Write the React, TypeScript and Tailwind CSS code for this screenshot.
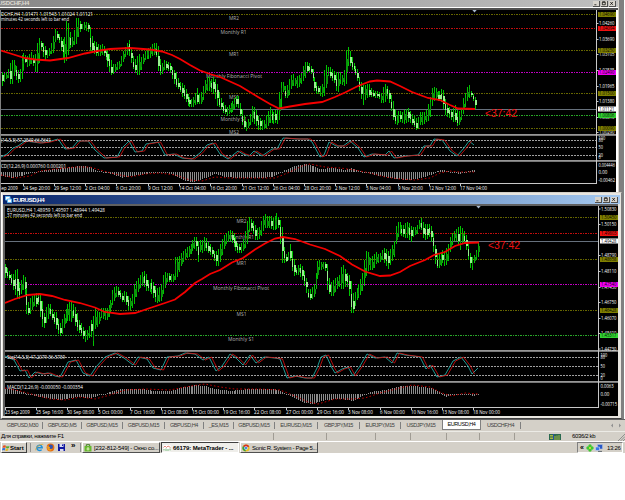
import { ReactNode } from "react";
import clsx from "clsx";

type Point = [number, number];
type Range = [number, number, number];

interface Level {
  y: number;
  color: string;
  tag: string;
  label?: string;
  labelX?: number;
  labelWidth?: number;
}

interface ChartData {
  box: { x: number; y: number; w: number; h: number };
  axisX: number;
  bottom: number;
  separators: number[];
  info: { text: string; x: number; y: number; w: number }[];
  levels: Level[];
  price: { y: number; tag: string };
  ticks: [number, string][];
  smallTicks: [number, string][];
  dates: [number, string][];
  ranges: Range[];
  average: Point[];
  stochLevels: number[];
  stoch: Point[];
  zero: number;
  macd: Point[];
  signal: Point[];
  timer: Point;
  shiftMark: Point;
}

const OLIVE = "#808000";
const RED = "#f01010";
const MAGENTA = "#f000f0";
const GREEN = "#32d232";
const BAR_STEP = 1.953;

const usdchf: ChartData = {
  box: { x: 1, y: 10, w: 615, h: 182 },
  axisX: 596.5,
  bottom: 183.5,
  separators: [134, 160],
  info: [
    { text: "DCHF,H4  1.01471 1.01543 1.01024 1.01121", x: 1, y: 16, w: 92 },
    { text: "minutes 42 seconds left to bar end", x: 1, y: 21, w: 68 },
    { text: "(14,3,3) 57.2549 66.5641", x: 1, y: 142, w: 50 },
    { text: "CD(12,26,9) 0.000760 0.000201", x: 1, y: 168, w: 65 },
  ],
  levels: [
    { y: 14.5, color: OLIVE, tag: "1.04690", label: "MR2", labelX: 229, labelWidth: 10 },
    { y: 28.5, color: RED, tag: "1.04094", label: "Monthly R1", labelX: 220.5, labelWidth: 26 },
    { y: 50.5, color: OLIVE, tag: "1.03250", label: "MR1", labelX: 229, labelWidth: 10 },
    { y: 72.5, color: MAGENTA, tag: "1.02490", label: "Monthly Fibonacci Pivot", labelX: 206, labelWidth: 56 },
    { y: 93.5, color: OLIVE, tag: "1.01500", label: "MS1", labelX: 229, labelWidth: 10 },
    { y: 115.5, color: GREEN, tag: "1.00806", label: "Monthly S1", labelX: 220.5, labelWidth: 26 },
    { y: 128.5, color: OLIVE, tag: "1.00090", label: "MS2", labelX: 229, labelWidth: 10 },
  ],
  price: { y: 109.5, tag: "1.01121" },
  ticks: [
    [23.5, "1.04260"], [39.5, "1.03690"], [54.5, "1.03105"], [70.5, "1.02535"],
    [86.5, "1.01965"], [101.5, "1.01380"], [117.5, "1.00810"], [132.5, "1.00290"],
  ],
  smallTicks: [
    [138.5, "100"], [140.5, "80"], [147.5, "50"], [155, "20"], [157.5, "0"],
    [165, "0.004446"], [172.5, "0.00"], [180, "-0.00462"],
  ],
  dates: [
    [-7, "22 Sep 2009"], [23, "24 Sep 20:00"], [54, "29 Sep 12:00"], [85, "2 Oct 04:00"],
    [116, "6 Oct 20:00"], [148, "9 Oct 12:00"], [179, "14 Oct 04:00"], [210, "16 Oct 20:00"],
    [242, "21 Oct 12:00"], [273, "26 Oct 04:00"], [304, "28 Oct 20:00"], [335, "2 Nov 12:00"],
    [366, "5 Nov 04:00"], [398, "9 Nov 20:00"], [429, "12 Nov 12:00"], [460, "17 Nov 04:00"],
  ],
  ranges: [
    [2, 72, 86], [5, 74, 79], [8, 69, 78], [11, 60, 87], [14, 60, 75], [17, 71, 83], [20, 69, 82],
    [22, 51, 78], [25, 55, 62], [28, 57, 68], [31, 52, 63], [34, 56, 66], [36, 54, 75], [38, 36, 70],
    [41, 41, 49], [44, 45, 60], [47, 50, 58], [50, 47, 54], [53, 35, 53], [55, 28, 40], [58, 33, 40],
    [61, 38, 52], [64, 41, 63], [67, 17, 60], [70, 31, 48], [73, 39, 46], [76, 18, 44], [79, 19, 34],
    [82, 24, 29], [85, 22, 30], [88, 23, 32], [90, 28, 52], [93, 41, 53], [96, 42, 56], [99, 46, 56],
    [102, 44, 54], [105, 49, 58], [108, 50, 68], [111, 60, 75], [114, 66, 73], [117, 63, 70],
    [120, 60, 68], [123, 51, 62], [126, 45, 54], [129, 40, 56], [132, 55, 67], [135, 60, 73],
    [138, 53, 76], [141, 58, 69], [144, 52, 60], [147, 49, 59], [150, 48, 58], [153, 43, 55],
    [156, 43, 55], [158, 45, 70], [161, 65, 76], [164, 60, 70], [167, 62, 70], [170, 63, 73],
    [173, 69, 82], [176, 73, 87], [179, 82, 90], [182, 83, 97], [185, 88, 101], [188, 95, 106],
    [191, 100, 107], [194, 97, 106], [197, 88, 104], [200, 95, 104], [202, 90, 104], [205, 80, 93],
    [208, 76, 90], [211, 79, 92], [214, 77, 95], [217, 85, 106], [220, 97, 108], [223, 103, 113],
    [226, 108, 115], [229, 105, 114], [232, 102, 112], [235, 98, 108], [238, 95, 106], [240, 102, 115],
    [243, 112, 128], [246, 122, 131], [249, 118, 126], [252, 106, 122], [255, 108, 124], [258, 117, 130],
    [261, 120, 130], [264, 120, 129], [267, 112, 127], [270, 107, 122], [273, 113, 124], [276, 110, 123],
    [278, 110, 124], [280, 83, 118], [283, 82, 91], [286, 88, 100], [289, 80, 95], [292, 73, 86],
    [295, 78, 86], [298, 76, 88], [301, 73, 83], [304, 62, 79], [307, 62, 72], [310, 65, 72],
    [313, 70, 82], [315, 80, 94], [319, 87, 94], [322, 86, 97], [325, 65, 95], [328, 67, 76],
    [331, 68, 79], [334, 71, 83], [337, 73, 95], [340, 72, 83], [343, 78, 86], [346, 48, 83],
    [348, 47, 62], [351, 55, 69], [354, 65, 71], [357, 67, 78], [360, 80, 94], [363, 85, 105],
    [366, 85, 98], [369, 84, 97], [372, 90, 96], [375, 91, 98], [378, 92, 97], [381, 93, 103],
    [384, 84, 103], [387, 86, 98], [390, 93, 107], [393, 103, 122], [396, 118, 125], [399, 110, 122],
    [402, 113, 122], [405, 110, 124], [408, 108, 122], [411, 113, 123], [414, 116, 127], [417, 120, 131],
    [420, 112, 125], [423, 113, 124], [426, 110, 122], [429, 100, 120], [432, 87, 104], [435, 87, 98],
    [438, 92, 101], [441, 90, 100], [443, 88, 108], [446, 103, 116], [449, 107, 117], [452, 111, 121],
    [455, 105, 122], [458, 113, 127], [461, 108, 120], [463, 98, 113], [466, 90, 103], [468, 83, 98],
    [471, 92, 97], [473, 95, 102], [475, 98, 110],
  ],
  average: [
    [1, 50.5], [12, 54], [25, 58], [35, 59.5], [50, 60.5], [68, 58], [85, 53.5], [100, 50.5],
    [110, 49], [130, 48], [150, 49.5], [162, 51.5], [172, 55], [180, 59], [190, 65], [200, 70.5],
    [210, 74], [220, 77], [240, 86], [258, 97], [270, 104], [279, 108.5], [290, 106.5], [305, 104],
    [322, 102], [335, 97], [345, 92.5], [358, 86], [370, 81.5], [377, 80.5], [390, 81.5], [400, 86],
    [412, 92], [428, 98], [440, 100], [450, 105], [458, 108.5], [475, 109],
  ],
  stochLevels: [140.5, 147.5, 155.5],
  stoch: [
    [1, 157], [7, 154], [13, 148], [18, 146], [25, 141], [33, 142], [40, 143], [48, 142], [58, 139],
    [65, 149], [72, 148], [78, 141], [88, 141], [95, 150], [104, 158], [117, 157], [122, 148],
    [129, 141], [135, 152], [142, 151], [146, 144], [158, 142], [165, 155], [174, 154], [182, 158],
    [192, 159], [200, 153], [207, 145], [213, 143], [220, 154], [228, 159], [238, 151], [243, 154],
    [249, 156], [254, 151], [262, 156], [272, 149], [277, 149], [283, 138], [297, 139], [308, 139],
    [312, 142], [320, 157], [324, 155], [329, 142], [336, 146], [343, 146], [350, 141], [358, 148],
    [364, 157], [372, 154], [385, 155], [389, 151], [394, 158], [405, 156], [418, 155], [424, 146],
    [430, 146], [434, 139], [442, 140], [450, 151], [457, 156], [464, 148], [469, 141], [474, 145],
  ],
  zero: 172,
  macd: [
    [1, 176], [12, 178], [25, 175], [33, 172], [40, 171], [55, 169], [65, 168], [80, 166], [90, 167],
    [97, 171], [105, 172], [115, 175], [122, 178], [130, 176], [140, 175], [150, 173], [165, 172],
    [175, 176], [185, 181], [195, 182], [205, 178], [215, 174], [225, 177], [240, 178], [260, 178],
    [272, 177], [280, 173], [285, 170], [295, 166], [305, 164], [310, 165], [320, 169], [332, 168],
    [345, 170], [350, 168], [360, 171], [370, 174], [380, 176], [395, 179], [410, 180], [420, 178],
    [430, 175], [437, 171], [443, 170], [450, 172], [460, 174], [468, 171], [474, 170],
  ],
  signal: [
    [1, 175], [15, 178], [30, 176], [40, 171], [55, 169], [75, 167], [90, 167], [100, 170], [115, 174],
    [130, 177], [145, 174], [160, 173], [175, 175], [190, 180], [202, 181], [215, 177], [230, 178],
    [255, 178], [275, 178], [290, 172], [302, 166], [310, 164], [325, 167], [340, 168], [355, 170],
    [370, 173], [385, 177], [400, 179], [415, 180], [430, 178], [440, 173], [450, 171], [460, 172],
    [474, 172],
  ],
  timer: [485, 117],
  shiftMark: [474.5, 10],
};

const eurusd: ChartData = {
  box: { x: 5, y: 206, w: 613, h: 210 },
  axisX: 598.5,
  bottom: 407.5,
  separators: [350, 381],
  info: [
    { text: "EURUSD,H4  1.48959 1.49597 1.48944 1.49428", x: 7, y: 212, w: 98 },
    { text: "37 minutes 42 seconds left to bar end", x: 7, y: 217, w: 75 },
    { text: "Sto(14,3,3) 47.2079 36.5739", x: 7, y: 358.5, w: 58 },
    { text: "MACD(12,26,9) -0.000050 -0.000354", x: 7, y: 389, w: 76 },
  ],
  levels: [
    { y: 217.5, color: OLIVE, tag: "1.50450", label: "MR2", labelX: 236.5, labelWidth: 10 },
    { y: 233.5, color: RED, tag: "1.49803", label: "Monthly R1", labelX: 228, labelWidth: 26 },
    { y: 259.5, color: OLIVE, tag: "1.48658", label: "MR1", labelX: 236.5, labelWidth: 10 },
    { y: 284.5, color: MAGENTA, tag: "1.47540", label: "Monthly Fibonacci Pivot", labelX: 213, labelWidth: 56 },
    { y: 310.5, color: OLIVE, tag: "1.46428", label: "MS1", labelX: 236.5, labelWidth: 10 },
    { y: 335.5, color: GREEN, tag: "1.45317", label: "Monthly S1", labelX: 228, labelWidth: 26 },
  ],
  price: { y: 241.5, tag: "1.49428" },
  ticks: [
    [209, "1.50830"], [224.5, "1.50150"], [255.5, "1.48790"], [271.5, "1.48110"],
    [287.5, "1.47430"], [302.5, "1.46750"], [318.5, "1.46070"], [333.5, "1.45410"], [349, "1.44730"],
  ],
  smallTicks: [
    [355, "100"], [357.5, "80"], [366.5, "50"], [375, "20"], [378, "0"],
    [386, "0.0063"], [394.5, "0.00"], [404.5, "-0.00715"],
  ],
  dates: [
    [5, "23 Sep 2009"], [36, "25 Sep 16:00"], [67, "30 Sep 08:00"], [98, "5 Oct 00:00"],
    [130, "7 Oct 16:00"], [161, "12 Oct 08:00"], [192, "15 Oct 00:00"], [223, "19 Oct 16:00"],
    [254, "22 Oct 08:00"], [286, "27 Oct 00:00"], [317, "29 Oct 16:00"], [348, "3 Nov 08:00"],
    [380, "6 Nov 00:00"], [411, "10 Nov 16:00"], [442, "13 Nov 08:00"], [473, "18 Nov 00:00"],
  ],
  ranges: [
    [5, 264, 278], [8, 270, 277], [11, 274, 285], [14, 275, 292], [16, 264, 299], [19, 285, 299],
    [22, 276, 290], [24, 275, 288], [26, 283, 313], [28, 303, 315], [31, 297, 313], [34, 296, 306],
    [37, 293, 307], [39, 293, 304], [41, 295, 326], [44, 313, 328], [47, 305, 320], [50, 304, 316],
    [53, 313, 322], [56, 312, 329], [59, 325, 337], [62, 318, 333], [65, 311, 323], [68, 303, 320],
    [71, 302, 322], [74, 305, 317], [76, 308, 330], [79, 320, 332], [82, 325, 337], [85, 330, 342],
    [88, 330, 338], [91, 320, 337], [93, 316, 346], [95, 308, 327], [98, 314, 326], [101, 308, 317],
    [104, 308, 320], [107, 308, 320], [110, 302, 313], [113, 288, 303], [116, 286, 297], [119, 288, 297],
    [122, 293, 302], [125, 290, 302], [128, 296, 310], [131, 299, 310], [134, 284, 303], [137, 280, 293],
    [140, 275, 287], [143, 270, 285], [146, 275, 291], [149, 285, 291], [152, 278, 294], [155, 286, 302],
    [158, 289, 303], [161, 285, 301], [164, 272, 291], [167, 273, 282], [170, 274, 282], [173, 274, 282],
    [175, 257, 280], [178, 258, 274], [181, 253, 265], [184, 250, 259], [187, 247, 258], [190, 245, 255],
    [193, 239, 250], [196, 236, 247], [198, 242, 264], [200, 240, 251], [202, 241, 253], [205, 236, 250],
    [208, 242, 253], [211, 245, 255], [214, 251, 261], [217, 252, 268], [220, 244, 261], [223, 236, 250],
    [226, 233, 243], [229, 230, 240], [232, 231, 243], [235, 236, 250], [238, 245, 253], [241, 244, 253],
    [244, 238, 250], [247, 222, 245], [249, 217, 232], [252, 220, 230], [255, 225, 240], [258, 230, 240],
    [261, 221, 235], [264, 213, 227], [267, 217, 228], [270, 216, 228], [273, 219, 230], [276, 213, 229],
    [279, 218, 228], [282, 224, 263], [285, 255, 263], [288, 253, 260], [290, 244, 260], [293, 255, 276],
    [296, 268, 275], [299, 264, 275], [302, 266, 280], [305, 274, 290], [308, 291, 299], [311, 288, 300],
    [314, 284, 296], [317, 262, 282], [319, 260, 270], [322, 263, 269], [325, 262, 268], [327, 263, 289],
    [330, 284, 296], [333, 280, 296], [336, 278, 289], [339, 275, 287], [342, 263, 290], [345, 270, 286],
    [348, 275, 287], [350, 277, 312], [353, 295, 313], [356, 290, 300], [359, 283, 297], [362, 276, 292],
    [364, 262, 287], [367, 248, 272], [370, 258, 270], [373, 256, 270], [376, 252, 264], [379, 255, 262],
    [382, 250, 260], [385, 248, 264], [388, 252, 269], [391, 247, 262], [394, 240, 256], [396, 223, 240],
    [399, 222, 233], [402, 226, 236], [405, 224, 238], [408, 222, 238], [411, 226, 242], [414, 228, 235],
    [417, 226, 234], [420, 217, 226], [423, 222, 238], [426, 225, 240], [429, 224, 236], [432, 228, 246],
    [434, 242, 262], [437, 255, 269], [440, 253, 266], [443, 250, 262], [445, 252, 267], [448, 245, 262],
    [451, 235, 248], [454, 232, 241], [457, 228, 240], [460, 226, 250], [463, 230, 240], [466, 235, 250],
    [468, 245, 260], [471, 258, 272], [474, 255, 262], [477, 246, 258], [479, 236, 255],
  ],
  average: [
    [5, 303], [15, 299], [28, 295], [40, 294], [52, 296], [65, 300], [80, 303], [95, 307.5],
    [105, 312], [120, 314], [135, 313], [150, 308], [165, 303], [175, 299.5], [185, 292], [195, 283],
    [202, 279], [210, 274], [220, 270], [232, 262.5], [243, 258], [255, 249.5], [265, 243.5],
    [275, 238.5], [283, 237], [295, 239], [310, 244.5], [325, 249], [340, 256], [352, 264.5],
    [365, 271.5], [380, 276], [390, 275.5], [400, 272], [410, 266], [425, 260], [434, 255],
    [445, 252], [455, 246], [465, 243], [479, 242.5],
  ],
  stochLevels: [357.5, 366.5, 375.5],
  stoch: [
    [5, 356], [14, 360], [20, 371], [25, 370], [29, 378], [35, 372], [42, 374], [48, 373], [55, 376],
    [60, 377], [68, 362], [76, 360], [83, 373], [90, 376], [96, 367], [105, 357], [115, 353],
    [124, 358], [133, 365], [138, 357], [147, 359], [153, 368], [161, 370], [167, 357], [178, 356],
    [185, 353], [195, 354], [203, 360], [209, 357], [216, 371], [222, 366], [230, 354], [236, 358],
    [243, 365], [250, 355], [256, 363], [264, 357], [275, 358], [280, 359], [287, 378], [295, 376],
    [305, 378], [312, 378], [317, 368], [321, 357], [326, 355], [332, 368], [335, 373], [342, 369],
    [348, 367], [353, 376], [360, 366], [367, 354], [375, 358], [385, 357], [392, 363], [397, 353],
    [405, 355], [420, 357], [426, 369], [430, 365], [437, 377], [445, 375], [453, 361], [461, 357],
    [468, 366], [472, 374], [478, 368],
  ],
  zero: 394,
  macd: [
    [5, 389], [12, 389], [22, 392], [30, 395], [45, 398], [60, 400], [70, 398], [80, 397], [90, 398],
    [100, 395], [110, 392], [120, 389], [140, 389], [155, 391], [170, 391], [180, 388], [195, 385],
    [205, 386], [215, 389], [230, 391], [250, 389], [275, 389], [285, 393], [295, 399], [305, 403],
    [312, 404], [325, 400], [340, 399], [352, 401], [362, 396], [370, 392], [385, 390], [400, 386],
    [415, 386], [430, 388], [440, 393], [446, 397], [455, 394], [468, 394], [473, 396], [478, 395],
  ],
  signal: [
    [5, 388], [20, 391], [35, 395], [50, 399], [65, 400], [80, 397], [95, 399], [110, 395], [125, 390],
    [145, 389], [170, 390], [185, 387], [205, 384], [220, 387], [235, 389], [260, 389], [280, 390],
    [295, 396], [308, 402], [318, 404], [335, 399], [352, 399], [365, 398], [380, 393], [400, 388],
    [412, 385], [430, 387], [442, 393], [452, 396], [465, 393], [478, 394],
  ],
  timer: [488, 249],
  shiftMark: [478.5, 206],
};

const toPoints = (points: Point[], dx = 0) =>
  points.map(([x, y]) => `${x + dx},${y}`).join(" ");

const valueAt = (points: Point[], x: number) => {
  const next = points.findIndex((p) => p[0] >= x);
  if (next === -1) return points[points.length - 1][1];
  if (next === 0) return points[0][1];
  const [x0, y0] = points[next - 1];
  const [x1, y1] = points[next];
  return y0 + ((y1 - y0) * (x - x0)) / (x1 - x0);
};

const barXs = (points: { 0: number }[]) => {
  const first = points[0][0];
  const last = points[points.length - 1][0];
  const count = Math.floor((last - first) / BAR_STEP) + 1;
  return [...Array(count)].map((_, idx) => first + idx * BAR_STEP);
};

const Candles = ({ ranges }: { ranges: Range[] }) => {
  const highs = ranges.map(([x, high]) => [x, high] as Point);
  const lows = ranges.map(([x, , low]) => [x, low] as Point);
  const mid = (x: number) => (valueAt(highs, x) + valueAt(lows, x)) / 2;

  return (
    <g shapeRendering="crispEdges">
      {barXs(ranges).map((x, idx) => {
        const wobble = ((idx * 7919) % 11) / 11;
        const high = valueAt(highs, x) - 0.3;
        const low = valueAt(lows, x) + 0.3;
        const size = Math.max(low - high, 3);
        const slope = mid(x + 2) - mid(x - 2);
        const falling = Math.abs(slope) < 2 ? idx % 4 === 0 : slope > 0;
        const px = Math.round(x);
        return (
          <g key={idx}>
            <rect x={px} y={high} width={1} height={size} fill="#00c400" />
            <rect
              x={px}
              y={high + size * (0.25 + wobble * 0.2)}
              width={idx % 2 === 0 ? 2 : 1}
              height={size * 0.4}
              fill={falling ? "#98f090" : "#0a960a"}
            />
          </g>
        );
      })}
    </g>
  );
};

const ChartText = ({
  x,
  y,
  w,
  fill = "#ffffff",
  size = 5.4,
  children,
}: {
  x: number;
  y: number;
  w: number;
  fill?: string;
  size?: number;
  children: ReactNode;
}) => (
  <text x={x} y={y} textLength={w} lengthAdjust="spacingAndGlyphs" fontSize={size} fill={fill}>
    {children}
  </text>
);

const PriceChart = ({ data }: { data: ChartData }) => {
  const { box, axisX, bottom, zero } = data;
  const right = box.x + box.w;

  return (
    <svg
      width={box.w}
      height={box.h}
      viewBox={`${box.x} ${box.y} ${box.w} ${box.h}`}
      className="block shrink-0 bg-black font-['Open_Sans','Liberation_Sans',sans-serif]"
    >
      <g shapeRendering="crispEdges" fill="none">
        {data.levels.map((level) => (
          <line
            key={level.y}
            x1={box.x}
            x2={axisX}
            y1={level.y}
            y2={level.y}
            stroke={level.color}
            strokeDasharray="2 1 1 1"
            opacity={0.8}
          />
        ))}
        <line x1={box.x} x2={axisX} y1={data.price.y} y2={data.price.y} stroke="#66707c" />
        {data.stochLevels.map((y) => (
          <line key={y} x1={box.x} x2={axisX} y1={y} y2={y} stroke="#a0a0a0" strokeDasharray="2 1" />
        ))}
      </g>

      {data.levels.map((level) => (
        <ChartText
          key={level.y}
          x={level.labelX!}
          y={level.y + 5}
          w={level.labelWidth!}
          fill="#b0b0b0"
        >
          {level.label}
        </ChartText>
      ))}

      <Candles ranges={data.ranges} />
      <polyline points={toPoints(data.average)} fill="none" stroke="#f50000" strokeWidth={1.8} />

      <g shapeRendering="crispEdges">
        {barXs(data.macd).map((x) => {
          const y = valueAt(data.macd, x);
          return (
            <rect
              key={x}
              x={Math.round(x)}
              y={Math.min(y, zero)}
              width={1}
              height={Math.max(Math.abs(y - zero), 1)}
              fill="#8c8c8c"
            />
          );
        })}
      </g>
      <polyline
        points={toPoints(data.signal)}
        fill="none"
        stroke="#d00000"
        strokeDasharray="1.6 2.2"
        strokeWidth={0.9}
      />
      <polyline points={toPoints(data.stoch)} fill="none" stroke="#209a94" strokeWidth={1} />
      <polyline
        points={toPoints(data.stoch.slice(0, -1), 2.5)}
        fill="none"
        stroke="#e01010"
        strokeWidth={0.8}
      />

      {data.separators.map((y) => (
        <rect key={y} x={box.x} y={y} width={box.w} height={1.8} fill="#969696" />
      ))}
      <g shapeRendering="crispEdges" stroke="#c8c8c8">
        <line x1={axisX} x2={axisX} y1={box.y} y2={bottom} />
        <line x1={box.x} x2={axisX} y1={bottom} y2={bottom} />
        {data.dates.map(([x]) => (
          <line key={x} x1={x + 0.5} x2={x + 0.5} y1={bottom} y2={bottom + 2} />
        ))}
      </g>

      {data.info.map((line) => (
        <ChartText key={line.text} {...line}>
          {line.text}
        </ChartText>
      ))}
      {data.dates.map(([x, text]) => (
        <ChartText key={x} x={x} y={bottom + 6.6} w={text.length * 2.25}>
          {text}
        </ChartText>
      ))}

      {data.ticks.map(([y, text]) => (
        <g key={y}>
          <rect x={axisX} y={y - 0.5} width={2} height={1} fill="#c8c8c8" />
          <ChartText x={axisX + 2.5} y={y + 1.8} w={15.5}>
            {text}
          </ChartText>
        </g>
      ))}
      {data.smallTicks.map(([y, text]) => (
        <ChartText
          key={y}
          x={axisX + 2}
          y={y + 1.8}
          w={Math.min(text.length * 2.2, right - axisX - 3)}
        >
          {text}
        </ChartText>
      ))}
      {data.levels.map((level) => (
        <g key={level.y}>
          <rect x={axisX + 1.5} y={level.y - 2.5} width={18} height={5} fill={level.color} />
          <ChartText x={axisX + 2.5} y={level.y + 1.9} w={15.5} fill="#000000">
            {level.tag}
          </ChartText>
        </g>
      ))}
      <rect x={axisX + 1.5} y={data.price.y - 3} width={18} height={5} fill="#fff" />
      <ChartText x={axisX + 2.5} y={data.price.y + 1.4} w={15.5} fill="#000">
        {data.price.tag}
      </ChartText>

      <path
        d={`M${data.shiftMark[0] - 2.2} ${data.shiftMark[1]}h4.4l-2.2 2.6z`}
        fill="#a8b8cc"
      />
      <text
        x={data.timer[0]}
        y={data.timer[1]}
        textLength={32}
        lengthAdjust="spacingAndGlyphs"
        fontSize={10.6}
        fill="#f01010"
        className="font-['Liberation_Sans',sans-serif]"
      >
        {"<37:42"}
      </text>
    </svg>
  );
};

const WindowButtons = () => (
  <div className="flex gap-px">
    {["M1.5 4.5h2.5", "M1.5 1.5h3.5v3h-3.5zM1.5 1h3.5", "M1.5 1.2l3 3.4M4.5 1.2l-3 3.4"].map((d) => (
      <svg key={d} viewBox="0 0 7 6" className="h-[6px] w-[7px] border-r border-b border-[#505050] bg-[#d8d4cc]">
        <path d={d} fill="none" stroke="#000" strokeWidth={0.9} />
      </svg>
    ))}
  </div>
);

const TABS = [
  { name: "GBPUSD,M30", cell: "w-[40px]" },
  { name: "GBPUSD,M5", cell: "w-[39px]" },
  { name: "GBPUSD,M15", cell: "w-[41px]" },
  { name: "GBPUSD,M15", cell: "w-[42px]" },
  { name: "GBPUSD,H4", cell: "w-[39px]" },
  { name: "_ES,M15", cell: "w-[30px]" },
  { name: "GBPUSD,M15", cell: "w-[41px]" },
  { name: "EURUSD,M15", cell: "w-[43px]" },
  { name: "GBPJPY,M15", cell: "w-[42px]" },
  { name: "EURJPY,M15", cell: "w-[41px]" },
  { name: "USDJPY,M15", cell: "w-[41px]" },
  { name: "EURUSD,H4", cell: "w-[39px]", active: true },
  { name: "USDCHF,H4", cell: "w-[40px]" },
];

const STATUS_CELLS = [
  "w-[53px]", "w-[49px]", "w-[35px]", "w-[36px]", "w-[33px]", "w-[35px]",
];

const ChartTabs = () => (
  <div className="flex h-[12px] items-center border-t border-[#606060] bg-[#d4d0c8] pl-[3px] text-[5.5px] leading-[7px] tracking-[-0.42px] text-[#404040]">
    {TABS.map((tab, idx) => (
      <div
        key={idx}
        className={clsx(
          "flex shrink-0 justify-center whitespace-nowrap",
          tab.cell,
          tab.active
            ? "h-[10px] items-center self-start border-x border-b border-[#404040] bg-white text-black"
            : "border-r",
          idx === 10 ? "border-transparent" : "border-[#808080]",
        )}
      >
        {tab.name}
      </div>
    ))}
    <svg viewBox="0 0 12 5" className="mr-[3px] ml-auto h-[5px] w-[12px] fill-[#909090]">
      <path d="M3 .5v4L1 2.5zM9 .5v4l2-2z" />
    </svg>
  </div>
);

const StatusBar = () => (
  <div className="flex h-[10px] items-center border-t border-[#ecebe6] bg-[#d4d0c8] text-[6px] leading-[7px] tracking-[-0.35px]">
    <div className="w-[273px] pl-px">Для справки, нажмите F1</div>
    {STATUS_CELLS.map((cell, idx) => (
      <div key={idx} className={clsx("h-[7px] border-l border-[#a09c94]", cell)} />
    ))}
    <div className="flex h-[7px] flex-1 items-center border-l border-[#a09c94]">
      <svg viewBox="0 0 12 6" className="ml-[34px] h-[6px] w-[12px]">
        <path d="M0 0h12v6H0z" fill="#2a6a50" />
        <path d="M1 1.5h3M1 3h3M1 4.5h3M6 2v4M8 1.5v4.5M10 1v5" stroke="#c8c840" strokeWidth={0.8} />
        <path d="M4.5 0v6" stroke="#2850a0" />
      </svg>
      <span className="ml-[11px]">6036/2 kb</span>
    </div>
    <svg viewBox="0 0 7 7" className="h-[7px] w-[7px] self-end">
      <path d="M0 7l7-7M2.5 7L7 2.5M5 7l2-2" stroke="#808080" strokeWidth={0.8} />
    </svg>
  </div>
);

const TaskButton = ({
  icon,
  title,
  tracking,
  active,
}: {
  icon: ReactNode;
  title: string;
  tracking: string;
  active?: boolean;
}) => (
  <div
    className={clsx(
      "mr-px flex h-[11px] w-[78px] items-center border whitespace-nowrap",
      tracking,
      active
        ? "border-t-[#404040] border-r-white border-b-white border-l-[#404040] bg-[#efeeea] font-bold"
        : "border-t-white border-r-[#505050] border-b-[#505050] border-l-white",
    )}
  >
    <svg viewBox="0 0 8 8" className="mr-[2px] ml-px h-[8px] w-[8px] shrink-0">
      {icon}
    </svg>
    {title}
  </div>
);

const Taskbar = () => (
  <div className="flex h-[12px] items-center border-t border-white bg-[#d4d0c8] pl-px text-[6px] leading-[8px]">
    <div className="flex h-[11px] w-[26px] items-center border border-t-white border-r-[#404040] border-b-[#404040] border-l-white font-bold">
      <svg viewBox="0 0 8 8" className="h-[8px] w-[8px]">
        <path d="M1 1.8q1.5-1 3 0l-.6 2.1q-1.4-.8-2.8 0z" fill="#e85020" />
        <path d="M4.4 2q1.5.8 3 0l-.6 2.1q-1.4.8-2.8 0z" fill="#50a830" />
        <path d="M.5 4.3q1.4-.8 2.8 0l-.6 2.1q-1.3-.8-2.7 0z" fill="#3070d8" />
        <path d="M3.8 4.5q1.4.8 2.8 0L6 6.6q-1.4.8-2.8 0z" fill="#e8b820" />
      </svg>
      Start
    </div>
    <div className="ml-[3px] h-[9px] w-px bg-[#909090]" />
    <svg viewBox="0 0 9 9" className="ml-[4px] h-[9px] w-[9px]">
      <path d="M2 4.8h5.2A2.7 2.7 0 1 0 6.6 6.6" fill="none" stroke="#2090d8" strokeWidth={1.5} />
      <path d="M.8 7.4C0 5 5 .6 8.3 1.4" fill="none" stroke="#e0a830" strokeWidth={0.8} />
    </svg>
    <svg viewBox="0 0 9 9" className="ml-[2px] h-[9px] w-[9px]">
      <circle cx={4.5} cy={4.5} r={3.9} fill="#e87010" />
      <circle cx={4.8} cy={3.8} r={2.2} fill="#3050b0" />
      <path d="M1 3l2 .4 1.2 1-1 1.3 3 .5-2 1.6-2.5-1z" fill="#f0a020" />
    </svg>
    <svg viewBox="0 0 9 9" className="ml-[2px] h-[9px] w-[9px]">
      <path d="M1 1h7v7H1z" fill="#1018a0" />
      <path d="M2.5 1h4v3h-4zM3 6h3.5v2H3z" fill="#d8d8f0" />
      <path d="M5 1.4h1V3H5z" fill="#1018a0" />
    </svg>
    <span className="ml-[5px] w-[8px] self-start text-[8px] font-bold">»</span>
    <div className="mr-px ml-[1px] h-[9px] w-px bg-[#909090]" />
    <TaskButton
      title="[232-812-549] - Окно со..."
      tracking="tracking-[-0.2px]"
      icon={
        <>
          <path d="M.5 2h7v5.5h-7z" fill="#68b830" />
          <path d="M2.3 2V.7h3.4V2" fill="none" stroke="#408020" />
          <path d="M3.5 3h1v3.5h-1zM2.5 4.5h3v1h-3z" fill="#e0f0c0" />
        </>
      }
    />
    <TaskButton
      active
      title="66179: MetaTrader - ..."
      tracking="tracking-[-0.1px]"
      icon={
        <>
          <path d="M.5 1h7v6.5h-7z" fill="#fff" />
          <path d="M.5 3.5l1.5-1.5 1.5 1.5L5 2l2.5 1.5" fill="none" stroke="#e07060" strokeWidth={0.8} />
          <path d="M1 6.5V5M3 7V4.5M5 7V5M7 6.5v-2" stroke="#50a050" strokeWidth={0.8} />
        </>
      }
    />
    <TaskButton
      title="Sonic R. System - Page 5..."
      tracking="tracking-[-0.34px]"
      icon={
        <>
          <circle cx={4} cy={4} r={3.6} fill="#e8c020" />
          <path d="M4 4L.9 2.2A3.6 3.6 0 0 1 7.3 2.5z" fill="#d83020" />
          <path d="M4 4L.9 2.2A3.6 3.6 0 0 0 3.5 7.6z" fill="#30a040" />
          <circle cx={4} cy={4} r={1.6} fill="#4080e0" stroke="#fff" strokeWidth={0.5} />
        </>
      }
    />
    <div className="mr-[2px] ml-auto flex h-[11px] w-[46px] items-center border border-t-[#808080] border-r-white border-b-white border-l-[#808080] tracking-[-0.3px]">
      <span className="ml-[2px] w-[6px] text-[7px] font-bold">«</span>
      <svg viewBox="0 0 8 8" className="h-[8px] w-[8px]">
        <g fill="#40c830">
          <circle cx={4} cy={2} r={1.7} />
          <circle cx={2} cy={4} r={1.7} />
          <circle cx={6} cy={4} r={1.7} />
          <circle cx={4} cy={6} r={1.7} />
        </g>
        <circle cx={4} cy={4} r={0.9} fill="#e8e040" />
      </svg>
      <svg viewBox="0 0 8 8" className="ml-px h-[8px] w-[8px]">
        <path d="M2.5.5h5V5h-5z" fill="#2858c8" stroke="#b0c0d8" strokeWidth={0.6} />
        <path d="M.5 3h4v3.5h-4z" fill="#3878e8" stroke="#d0d8e8" strokeWidth={0.6} />
        <path d="M3 7.4h4" stroke="#606870" />
      </svg>
      <span className="ml-[4px]">13:26</span>
    </div>
  </div>
);

export default function App() {
  return (
    <div className="h-[500px] w-[625px] overflow-hidden bg-white font-['Liberation_Sans',sans-serif] text-black">
      <div className="flex h-[419px] bg-[#808080]">
        <div className="w-[622px] shrink-0">
          <div className="flex h-[192px] w-[619px] flex-col border-r border-[#d4d0c8] bg-white">
            <div className="flex h-[7px] shrink-0 items-center justify-between overflow-hidden bg-linear-to-r from-[#888888] to-[#c0c0c0] pr-[2px]">
              <div className="-ml-[2px] text-[6px] leading-[7px] font-bold tracking-[-0.3px] text-[#dedad2]">
                USDCHF,H4
              </div>
              <WindowButtons />
            </div>
            <div className="mt-px h-[2px] shrink-0 bg-[#505050]" />
            <div className="border-l border-[#808080]">
              <PriceChart data={usdchf} />
            </div>
          </div>

          <div className="ml-px flex h-[227px] w-[621px] flex-col border border-t-[#d4d0c8] border-r-[#808080] border-b-[#404040] border-l-white bg-[#e8e6e0] pt-[2px] pl-px">
            <div className="mr-px flex h-[9px] shrink-0 items-center justify-between bg-linear-to-r from-[#0a246a] to-[#a6caf0] pr-[2px] pl-[2px]">
              <div className="flex items-center gap-[1px] text-[6.2px] leading-[8px] font-bold tracking-[-0.5px] text-white">
                <svg viewBox="0 0 7 7" className="h-[7px] w-[7px]">
                  <path d="M.5 .5h4.5v3.5H.5z" fill="#fff" stroke="#60b8f0" />
                  <path d="M2.5 3h4v3.5h-4z" fill="#fff" stroke="#60b8f0" />
                </svg>
                EURUSD,H4
              </div>
              <WindowButtons />
            </div>
            <div className="w-[615px] border-t-2 border-l-2 border-[#606060]">
              <PriceChart data={eurusd} />
            </div>
          </div>
        </div>
        <div className="w-[3px] border-r border-white bg-[#808080]" />
      </div>
      <ChartTabs />
      <StatusBar />
      <Taskbar />
    </div>
  );
}
